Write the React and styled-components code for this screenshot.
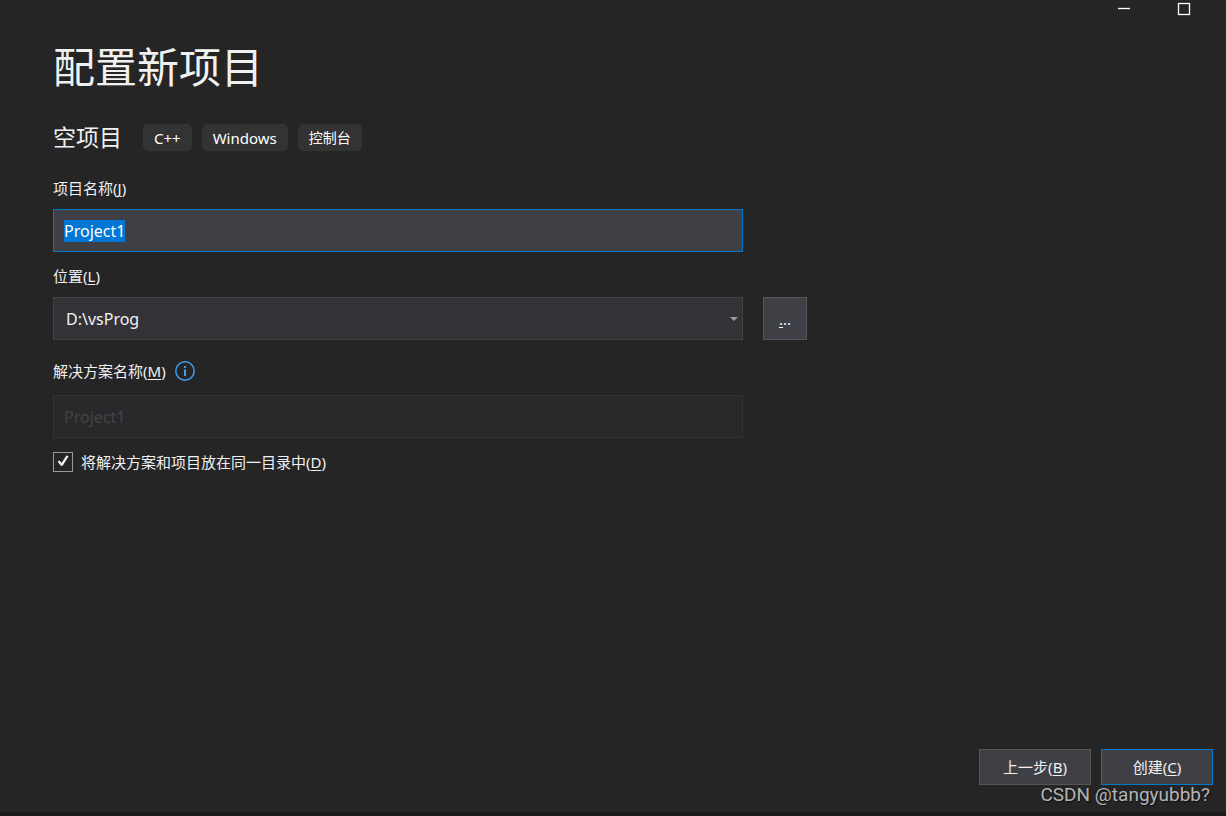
import React, { useEffect, useRef, useState } from 'react'
import styled, { createGlobalStyle } from 'styled-components'

const GlobalStyle = createGlobalStyle`
  * {
    box-sizing: border-box;
  }

  body {
    margin: 0;
    background: #252526;
    color: #f1f1f1;
    font-family: 'Noto Sans', 'Noto Sans CJK SC', sans-serif;
    font-size: 15px;
    line-height: 22px;
  }

  button, input, select {
    font: inherit;
    color: inherit;
    margin: 0;
  }
`

const tags = [
  { label: 'C++' },
  { label: 'Windows' },
  { label: '控制台', small: true },
]

// caption followed by its underlined access key
function Caption({ text, hotkey }) {
  return (
    <span>
      {text}(<HotKey>{hotkey}</HotKey>)
    </span>
  )
}

function WindowControls() {
  return (
    <TitleBar>
      <WindowButton type="button" aria-label="最小化">
        <svg width="14" height="14" viewBox="0 0 14 14">
          <path d="M1 6.5H13" stroke="#fff" strokeWidth="1.3" />
        </svg>
      </WindowButton>
      <WindowButton type="button" aria-label="最大化">
        <svg width="14" height="14" viewBox="0 0 14 14">
          <rect x="1.5" y="1.5" width="11" height="11" fill="none" stroke="#fff" strokeWidth="1.3" />
        </svg>
      </WindowButton>
    </TitleBar>
  )
}

function InfoIcon() {
  return (
    <svg width="20" height="20" viewBox="0 0 20 20">
      <circle cx="10" cy="10" r="9.2" fill="none" stroke="#3f9fee" strokeWidth="1.5" />
      <path d="M9 5h2v2H9zM9 8.5h2V15H9z" fill="#3f9fee" />
    </svg>
  )
}

const App = () => {
  const [name, setName] = useState('Project1')
  const [sameFolder, setSameFolder] = useState(true)
  const nameRef = useRef(null)

  useEffect(() => {
    nameRef.current.focus()
    nameRef.current.select()
  }, [])

  return (
    <>
      <GlobalStyle />
      <Page>
        <WindowControls />
        <Content>
          <Title>配置新项目</Title>
          <Template>
            <TemplateName>空项目</TemplateName>
            <TagList>
              {tags.map((tag) => (
                <Tag key={tag.label} $small={tag.small}>{tag.label}</Tag>
              ))}
            </TagList>
          </Template>

          <Field>
            <Label htmlFor="name">
              <Caption text="项目名称" hotkey="J" />
            </Label>
            <FieldRow>
              <TextInput
                id="name"
                ref={nameRef}
                value={name}
                spellCheck={false}
                onChange={(e) => setName(e.target.value)}
              />
            </FieldRow>
          </Field>

          <Field>
            <Label htmlFor="location">
              <Caption text="位置" hotkey="L" />
            </Label>
            <FieldRow>
              <SelectBox>
                <Select id="location" defaultValue="D:\vsProg">
                  <option>D:\vsProg</option>
                </Select>
                <Arrow width="8" height="4" viewBox="0 0 8 4">
                  <path d="M0 0h8L4 4z" fill="#999" />
                </Arrow>
              </SelectBox>
              <BrowseButton type="button" aria-label="浏览">
                <HotKey>.</HotKey>..
              </BrowseButton>
            </FieldRow>
          </Field>

          <Field>
            <Label htmlFor="solution" $roomy>
              <Caption text="解决方案名称" hotkey="M" />
              <InfoIcon />
            </Label>
            <FieldRow>
              <TextInput id="solution" value={name} disabled readOnly />
            </FieldRow>
          </Field>

          <CheckLabel>
            <CheckBox
              type="checkbox"
              checked={sameFolder}
              onChange={(e) => setSameFolder(e.target.checked)}
            />
            <CheckMark viewBox="0 0 20 20">
              {sameFolder && (
                <path d="M4.6 9.6L6.6 8.6L8.6 11L13.4 3.6L15.6 4.2L9.6 13.8H7.8z" fill="#f1f1f1" />
              )}
            </CheckMark>
            <Caption text="将解决方案和项目放在同一目录中" hotkey="D" />
          </CheckLabel>
        </Content>

        <Footer>
          <ActionButton type="button">
            <Caption text="上一步" hotkey="B" />
          </ActionButton>
          <ActionButton type="button" $primary>
            <Caption text="创建" hotkey="C" />
          </ActionButton>
          <Watermark>CSDN @tangyubbb?</Watermark>
        </Footer>
      </Page>
    </>
  )
}

export default App


const Page = styled.div`
  display: flex;
  flex-direction: column;
  min-height: 100vh;
  border-bottom: 4px solid #1e1a1d;
`

const TitleBar = styled.header`
  display: flex;
  justify-content: flex-end;
  height: 18px;
  padding-right: 12px;
`

const WindowButton = styled.button`
  display: flex;
  align-items: center;
  justify-content: center;
  width: 60px;
  padding: 0;
  border: none;
  background: none;
`

const Content = styled.main`
  flex: 1;
  padding: 20px 53px;
`

const Title = styled.h1`
  margin: 0;
  font-size: 42px;
  font-weight: 400;
  line-height: 58px;
`

const Template = styled.div`
  display: flex;
  align-items: center;
  gap: 21px;
  margin: 28px 0 26px;
`

const TemplateName = styled.h2`
  margin: 0;
  font-size: 23px;
  font-weight: 400;
  line-height: 27px;
`

const TagList = styled.ul`
  display: flex;
  gap: 10px;
  margin: 0;
  padding: 0;
  list-style: none;
`

const Tag = styled.li`
  height: 27px;
  padding: 0 11px;
  border-radius: 5px;
  background: #333334;
  color: #fff;
  font-size: ${(props) => (props.$small ? '14px' : '15px')};
  line-height: 28px;
`

const Field = styled.div`
  margin-bottom: 13px;
`

const Label = styled.label`
  display: flex;
  align-items: center;
  gap: 9px;
  padding: ${(props) => (props.$roomy ? '7px 0 3px' : '0')};
  margin-bottom: 10px;
`

const HotKey = styled.span`
  text-decoration: underline;
  text-decoration-thickness: 1px;
  text-underline-offset: 2px;
`

const FieldRow = styled.div`
  display: grid;
  grid-template-columns: minmax(0, 690px) 44px;
  gap: 20px;
`

const TextInput = styled.input`
  width: 100%;
  height: 43px;
  padding: 0 10px;
  border: 1px solid #007acc;
  border-radius: 0;
  outline: none;
  background: #3f3f46;
  font-size: 16px;

  &::selection {
    background: rgba(0, 120, 215, 0.99);
    color: #fff;
  }

  &:disabled {
    border-color: #333334;
    background: #29292b;
    color: #434346;
  }
`

const SelectBox = styled.div`
  position: relative;
`

const Select = styled.select`
  width: 100%;
  height: 43px;
  padding: 0 12px;
  border: 1px solid #434346;
  border-radius: 0;
  appearance: none;
  background: #333337;
  font-size: 16px;
`

const Arrow = styled.svg`
  position: absolute;
  top: 20px;
  right: 5px;
  pointer-events: none;
`

const BrowseButton = styled.button`
  height: 43px;
  padding: 0;
  border: 1px solid #555;
  background: #3f3f46;
`

const CheckLabel = styled.label`
  display: inline-flex;
  align-items: center;
  gap: 8px;
  position: relative;
`

const CheckBox = styled.input`
  width: 20px;
  height: 20px;
  border: 1px solid #999;
  appearance: none;
  background: #252526;
`

const CheckMark = styled.svg`
  position: absolute;
  left: 0;
  width: 20px;
  height: 20px;
  pointer-events: none;
`

const Footer = styled.footer`
  display: flex;
  justify-content: flex-end;
  gap: 10px;
  position: relative;
  padding: 0 13px 27px;
`

const ActionButton = styled.button`
  width: 112px;
  height: 36px;
  padding: 0;
  border: 1px solid ${(props) => (props.$primary ? '#007acc' : '#555')};
  background: #3f3f46;
`

const Watermark = styled.span`
  position: absolute;
  right: 16px;
  bottom: 6px;
  color: #b4b4b4;
  font-family: Roboto, sans-serif;
  font-size: 19px;
  text-shadow: 1px 1px 1px #111;
`
